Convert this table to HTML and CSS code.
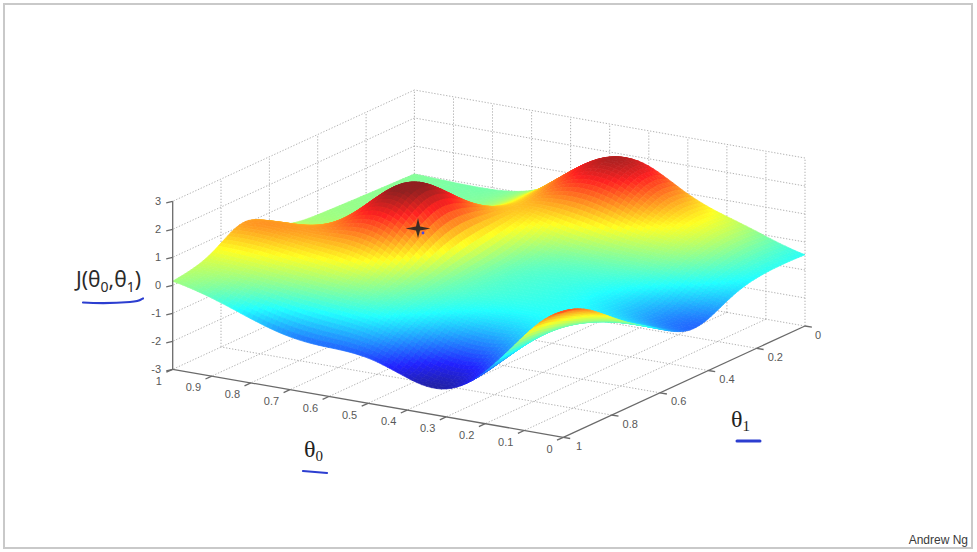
FILE: index.html
```html
<!DOCTYPE html>
<html lang="en">
<head>
<meta charset="utf-8">
<title>Cost function J(θ0, θ1)</title>
<link rel="stylesheet" href="styles.css">
</head>
<body>
<div class="slide">
  <div class="frame">
    <svg class="plot" viewBox="5 5 966 542" width="966" height="542" xmlns="http://www.w3.org/2000/svg">
      <g id="grid"></g>
      <g id="surface"></g>
      <g id="axes"></g>

      <g class="ticks-z">
        <text class="tick tick-end" x="161" y="204.8">3</text>
        <text class="tick tick-end" x="161" y="232.8">2</text>
        <text class="tick tick-end" x="161" y="260.8">1</text>
        <text class="tick tick-end" x="161" y="288.8">0</text>
        <text class="tick tick-end" x="161" y="316.8">-1</text>
        <text class="tick tick-end" x="161" y="344.8">-2</text>
        <text class="tick tick-end" x="161" y="372.8">-3</text>
      </g>

      <g class="ticks-t0">
        <text class="tick tick-end" x="552.5" y="452.5">0</text>
        <text class="tick tick-end" x="513.4" y="445.7">0.1</text>
        <text class="tick tick-end" x="474.4" y="438.9">0.2</text>
        <text class="tick tick-end" x="435.3" y="432.1">0.3</text>
        <text class="tick tick-end" x="396.3" y="425.3">0.4</text>
        <text class="tick tick-end" x="357.2" y="418.5">0.5</text>
        <text class="tick tick-end" x="318.1" y="411.7">0.6</text>
        <text class="tick tick-end" x="279.1" y="404.9">0.7</text>
        <text class="tick tick-end" x="240.0" y="398.1">0.8</text>
        <text class="tick tick-end" x="201.0" y="391.3">0.9</text>
        <text class="tick tick-end" x="161.9" y="384.5">1</text>
      </g>

      <g class="ticks-t1">
        <text class="tick" x="815" y="338.5">0</text>
        <text class="tick" x="767.7" y="360.8">0.2</text>
        <text class="tick" x="719.3" y="383">0.4</text>
        <text class="tick" x="671" y="405.3">0.6</text>
        <text class="tick" x="622.6" y="427.5">0.8</text>
        <text class="tick" x="576" y="449.5">1</text>
      </g>

      <text class="label-j" x="76" y="287">J(θ<tspan class="sub-j" dy="5">0</tspan><tspan dy="-5">,θ</tspan><tspan class="sub-j" dy="5">1</tspan><tspan dy="-5">)</tspan></text>
      <path class="ink" d="M83 302.5 C 100 303.5, 118 303, 130 302 S 140 299.5, 143 298.5"/>

      <text class="label-theta" x="304" y="457">θ<tspan class="sub-theta" dy="4">0</tspan></text>
      <path class="ink" d="M303 471 L 327 473"/>

      <text class="label-theta" x="731" y="427">θ<tspan class="sub-theta" dy="4">1</tspan></text>
      <path class="ink ink-thick" d="M737 441 L 760 441"/>

      <path class="marker" d="M418 218 L420 226.5 L430.5 228.5 L420 230.5 L418 238 L416 230.5 L405.5 228.5 L416 226.5 Z"/>
      <circle class="marker-dot" cx="423" cy="233" r="1.4"/>

      <text class="credit" x="968" y="544">Andrew Ng</text>
    </svg>
  </div>
</div>
<script src="script.js"></script>
</body>
</html>
```

FILE: styles.css
```css
html, body {
  margin: 0;
  padding: 0;
  background: #ffffff;
}

.slide {
  width: 977px;
  height: 552px;
  box-sizing: border-box;
  padding: 3px 4px 3px 3px;
}

.frame {
  height: 100%;
  box-sizing: border-box;
  border: 2px solid #c9c9c9;
  overflow: hidden;
}

.plot {
  display: block;
}

.grid-line {
  stroke: #a9a9a9;
  stroke-width: 0.9;
  stroke-dasharray: 1.3 1.7;
  fill: none;
}

.axis-line {
  stroke: #6a6a6a;
  stroke-width: 1.3;
  fill: none;
}

.cell {
  stroke-width: 0.7;
  stroke-linejoin: round;
}

.tick {
  font-family: "Liberation Sans", Arial, sans-serif;
  font-size: 11px;
  fill: #585858;
}

.tick-end {
  text-anchor: end;
}

.label-j {
  font-family: "Noto Sans", "Open Sans", sans-serif;
  font-size: 21px;
  fill: #2a2a2a;
}

.sub-j {
  font-size: 14px;
}

.label-theta {
  font-family: "Liberation Serif", "Times New Roman", serif;
  font-size: 24px;
  fill: #222222;
}

.sub-theta {
  font-size: 15px;
}

.ink {
  fill: none;
  stroke: #2c3ed0;
  stroke-width: 2.2;
  stroke-linecap: round;
}

.ink-thick {
  stroke-width: 3;
}

.marker {
  fill: #262626;
  fill-opacity: 0.9;
}

.marker-dot {
  fill: #4a4ae0;
}

.credit {
  font-family: "Liberation Sans", Arial, sans-serif;
  font-size: 12px;
  fill: #3a3a3a;
  text-anchor: end;
}
```

FILE: script.js
```js
(function () {
  var X0 = 805, Y0 = 326, UX = -390.6, UY = -68, VX = -241.7, VY = 111.3, ZS = 28;
  var CMIN = -2.15, CMAX = 2.25;

  function P(u, v, z) {
    return [X0 + UX * u + VX * v, Y0 + UY * u + VY * v - ZS * (z + 3)];
  }

  function g(u, v, cu, cv, su, sv) {
    var a = (u - cu) / su, b = (v - cv) / sv;
    return Math.exp(-(a * a + b * b));
  }

  function f(u, v) {
    return -0.6 + 0.6 * u + 0.3 * u * v
      + 2.4 * g(u, v, 0.70, 0.50, 0.13, 0.19)    /* left peak */
      + 2.4 * g(u, v, 0.45, 0.06, 0.18, 0.20)    /* right peak */
      + 0.7 * g(u, v, 0.18, 0.10, 0.15, 0.25)    /* right peak shoulder */
      + 0.45 * g(u, v, 0.57, 0.32, 0.10, 0.14)   /* saddle */
      - 1.6 * g(u, v, 0.315, 1.00, 0.17, 0.20)   /* valley */
      - 1.55 * g(u, v, 0.66, 1.08, 0.24, 0.15)   /* front trough */
      + 0.95 * g(u, v, 0.94, 0.70, 0.20, 0.13)   /* shoulder */
      + 2.15 * g(u, v, -0.02, 1.00, 0.16, 0.25)  /* front-corner ridge */
      - 0.7 * g(u, v, 0.00, 0.46, 0.18, 0.15);   /* right dip */
  }

  function fx(n) { return n.toFixed(1); }

  function line(a, b, cls) {
    return '<line class="' + cls + '" x1="' + fx(a[0]) + '" y1="' + fx(a[1]) +
      '" x2="' + fx(b[0]) + '" y2="' + fx(b[1]) + '"/>';
  }

  /* grid: floor and the two back walls */
  var gs = '', k, z;
  for (k = 1; k <= 10; k++) gs += line(P(k / 10, 0, -3), P(k / 10, 1, -3), 'grid-line');
  for (k = 0; k < 5; k++) gs += line(P(0, k * 0.2, -3), P(1, k * 0.2, -3), 'grid-line');
  for (k = 0; k < 5; k++) gs += line(P(1, k * 0.2, -3), P(1, k * 0.2, 3), 'grid-line');
  for (z = -2; z <= 3; z++) gs += line(P(1, 0, z), P(1, 1, z), 'grid-line');
  for (k = 0; k < 10; k++) gs += line(P(k / 10, 0, -3), P(k / 10, 0, 3), 'grid-line');
  for (z = -2; z <= 3; z++) gs += line(P(0, 0, z), P(1, 0, z), 'grid-line');
  document.getElementById('grid').innerHTML = gs;

  /* surface */
  var N = 80, Z = [], i, j;
  for (i = 0; i <= N; i++) {
    Z[i] = [];
    for (j = 0; j <= N; j++) Z[i][j] = f(i / N, j / N);
  }

  function cl(x) { return x < 0 ? 0 : (x > 1 ? 1 : x); }
  function jet(t) {
    t = cl(t);
    var r = cl(1.5 - Math.abs(4 * t - 3));
    var gg = cl(1.5 - Math.abs(4 * t - 2));
    var b = cl(1.5 - Math.abs(4 * t - 1));
    var w = 0.13;
    return 'rgb(' + Math.round((r * (1 - w) + w) * 255) + ',' +
      Math.round((gg * (1 - w) + w) * 255) + ',' +
      Math.round((b * (1 - w) + w) * 255) + ')';
  }

  var quads = [];
  for (i = 0; i < N; i++) {
    for (j = 0; j < N; j++) {
      var uc = (i + 0.5) / N, vc = (j + 0.5) / N;
      quads.push({ i: i, j: j, k: UY * uc + VY * vc });
    }
  }
  quads.sort(function (a, b) { return a.k - b.k; });

  var ss = '';
  for (var q = 0; q < quads.length; q++) {
    i = quads[q].i; j = quads[q].j;
    var z00 = Z[i][j], z10 = Z[i + 1][j], z11 = Z[i + 1][j + 1], z01 = Z[i][j + 1];
    var p1 = P(i / N, j / N, z00), p2 = P((i + 1) / N, j / N, z10),
        p3 = P((i + 1) / N, (j + 1) / N, z11), p4 = P(i / N, (j + 1) / N, z01);
    var c = jet(((z00 + z10 + z11 + z01) / 4 - CMIN) / (CMAX - CMIN));
    ss += '<path class="cell" fill="' + c + '" stroke="' + c + '" d="M' + fx(p1[0]) + ' ' + fx(p1[1]) +
      'L' + fx(p2[0]) + ' ' + fx(p2[1]) + 'L' + fx(p3[0]) + ' ' + fx(p3[1]) +
      'L' + fx(p4[0]) + ' ' + fx(p4[1]) + 'Z"/>';
  }
  document.getElementById('surface').innerHTML = ss;

  /* axes and ticks */
  var as = '';
  as += line(P(1, 1, -3), P(1, 1, 3), 'axis-line');
  as += line(P(0, 1, -3), P(1, 1, -3), 'axis-line');
  as += line(P(0, 0, -3), P(0, 1, -3), 'axis-line');
  for (z = -3; z <= 3; z++) {
    var a = P(1, 1, z);
    as += line(a, [a[0] - 6.5, a[1] + 1.5], 'axis-line');
  }
  for (k = 0; k <= 10; k++) {
    var b0 = P(k / 10, 1, -3);
    as += line(b0, [b0[0] - 6.3, b0[1] + 2.9], 'axis-line');
  }
  for (k = 0; k <= 5; k++) {
    var c0 = P(0, k * 0.2, -3);
    as += line(c0, [c0[0] + 6.9, c0[1] + 1.2], 'axis-line');
  }
  document.getElementById('axes').innerHTML = as;
})();
```
